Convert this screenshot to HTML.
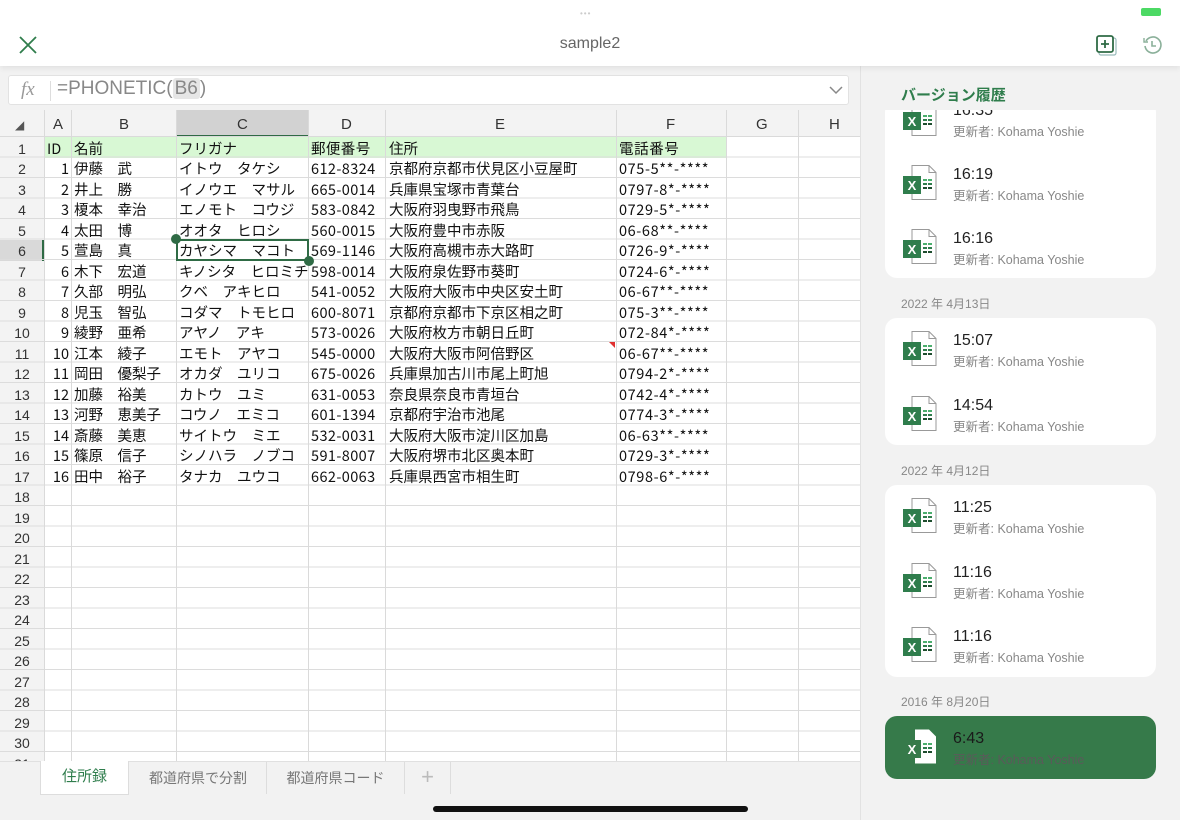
<!DOCTYPE html>
<html><head><meta charset="utf-8"><style>
*{margin:0;padding:0;box-sizing:border-box}
body{width:1180px;height:820px;overflow:hidden;background:#f2f2f2;font-family:"Liberation Sans","Noto Sans CJK JP",sans-serif;position:relative}
.abs{position:absolute}
#top{left:0;top:0;width:1180px;height:66px;background:#fff;box-shadow:0 2px 6px rgba(0,0,0,.08);z-index:5}
#grid{left:0;top:110px;width:860px;height:651px;background:#fff;overflow:hidden;font-family:"Noto Sans CJK JP","Liberation Sans",sans-serif;font-size:14.5px;color:#111}
.vl{position:absolute;top:0;width:1px;height:651px;background:#dadada}
.hl{position:absolute;left:0;width:860px;height:1px;background:#dadada}
.r{position:absolute;left:0;height:20.5px;line-height:20.5px;width:860px;white-space:nowrap}
.r span{position:absolute;top:1.5px}
.n{left:0;width:44px;text-align:center;color:#333;font-family:"Liberation Sans",sans-serif;font-size:14px}
.a{left:44px;width:25px;text-align:right}
.b{left:74px}.c{left:179px}.d{left:311px;letter-spacing:.4px}.e{left:389px}.f{left:619px;letter-spacing:.6px}
.card{position:absolute;left:885px;width:271px;background:#fff;border-radius:12px}
.it{position:absolute;left:903px;width:240px;height:50px}
.it .t{position:absolute;left:50px;top:3px;font-size:16px;color:#222}
.it .s{position:absolute;left:50px;top:22px;font-size:12.5px;color:#888}
.it svg{position:absolute;left:0;top:2px}
.dt{position:absolute;left:901px;font-size:12px;color:#888}
</style></head><body>
<div id="top" class="abs">
 <div class="abs" style="left:580px;top:9px;width:20px;height:4px;color:#ccc;font-size:8px;letter-spacing:1px">•••</div>
 <div class="abs" style="left:1141px;top:8px;width:20px;height:8px;background:#4cd964;border-radius:2px"></div>
 <svg class="abs" style="left:18px;top:35px" width="20" height="20"><path d="M2 2L18 18M18 2L2 18" stroke="#2f7d4c" stroke-width="1.8"/></svg>
 <div class="abs" style="left:0;width:1180px;top:35px;text-align:center;font-size:16px;color:#666">sample2</div>
 <svg class="abs" style="left:1095px;top:34px" width="24" height="24"><rect x="4" y="4" width="17" height="17" rx="2" fill="none" stroke="#9bb" stroke-width="1.2"/><rect x="2" y="2" width="16" height="16" rx="2" fill="#fff" stroke="#2f6b45" stroke-width="1.8"/><path d="M10 6v8M6 10h8" stroke="#2f6b45" stroke-width="1.8"/></svg>
 <svg class="abs" style="left:1142px;top:35px" width="20" height="20"><path d="M4 6A8 8 0 1 1 3 11" fill="none" stroke="#8bb09a" stroke-width="1.6"/><path d="M2 3v4h4" fill="none" stroke="#8bb09a" stroke-width="1.4"/><path d="M10 6v5h4" fill="none" stroke="#8bb09a" stroke-width="1.6"/></svg>
</div>
<div class="abs" style="left:8px;top:75px;width:841px;height:30px;background:#fff;border:1px solid #e2e2e2;border-radius:3px">
 <div class="abs" style="left:12px;top:3px;font-family:'Liberation Serif',serif;font-style:italic;font-size:19px;color:#999">fx</div>
 <div class="abs" style="left:41px;top:5px;width:1px;height:20px;background:#ddd"></div>
 <div class="abs" style="left:48px;top:2px;font-size:19px;color:#888">=PHONETIC(<span style="background:#e6e6e6;border-radius:3px;padding:0 2px">B6</span>)</div>
 <svg class="abs" style="left:820px;top:9px" width="14" height="10"><path d="M1 2l6 6 6-6" fill="none" stroke="#888" stroke-width="1.5"/></svg>
</div>
<div id="grid" class="abs">
 <div class="abs" style="left:0;top:0;width:860px;height:27px;background:#f3f3f3"></div>
 <div class="abs" style="left:0;top:0;width:44px;height:651px;background:#f3f3f3"></div>
 <div class="abs" style="left:176px;top:0;width:132px;height:27px;background:#d2d2d2;border-bottom:2px solid #2f6b45"></div>
 <div class="abs" style="left:0;top:130px;width:44px;height:20.5px;background:#d9d9d9;border-right:2px solid #2f6b45"></div>
 <div class="abs" style="left:44px;top:27px;width:682px;height:20.5px;background:#d8f8d4"></div>
 <div class="abs" style="left:0;top:27px;width:860px;height:624px;background:repeating-linear-gradient(to bottom,transparent 0,transparent 19.5px,#dcdcdc 19.5px,#dcdcdc 20.5px)"></div>
 <div class="vl" style="left:44px"></div><div class="vl" style="left:71px"></div><div class="vl" style="left:176px"></div><div class="vl" style="left:308px"></div><div class="vl" style="left:385px"></div><div class="vl" style="left:616px"></div><div class="vl" style="left:726px"></div><div class="vl" style="left:798px"></div>
 <div class="hl" style="top:26px"></div>
 <div class="r" style="top:3px;font-family:'Liberation Sans',sans-serif;color:#333;font-size:15px"><span style="left:15px;font-size:12px;color:#555">◢</span><span style="left:53px">A</span><span style="left:119px">B</span><span style="left:237px">C</span><span style="left:341px">D</span><span style="left:495px">E</span><span style="left:666px">F</span><span style="left:756px">G</span><span style="left:829px">H</span></div>
 <div class="r" style="top:27px"><span class="n">1</span><span style="left:47px">ID</span><span class="b">名前</span><span class="c">フリガナ</span><span class="d">郵便番号</span><span class="e">住所</span><span class="f">電話番号</span></div>
 <div class="r" style="top:47.5px"><span class="n">2</span><span class="a">1</span><span class="b">伊藤　武</span><span class="c">イトウ　タケシ</span><span class="d">612-8324</span><span class="e">京都府京都市伏見区小豆屋町</span><span class="f">075-5**-****</span></div>
 <div class="r" style="top:68px"><span class="n">3</span><span class="a">2</span><span class="b">井上　勝</span><span class="c">イノウエ　マサル</span><span class="d">665-0014</span><span class="e">兵庫県宝塚市青葉台</span><span class="f">0797-8*-****</span></div>
 <div class="r" style="top:88.5px"><span class="n">4</span><span class="a">3</span><span class="b">榎本　幸治</span><span class="c">エノモト　コウジ</span><span class="d">583-0842</span><span class="e">大阪府羽曳野市飛鳥</span><span class="f">0729-5*-****</span></div>
 <div class="r" style="top:109px"><span class="n">5</span><span class="a">4</span><span class="b">太田　博</span><span class="c">オオタ　ヒロシ</span><span class="d">560-0015</span><span class="e">大阪府豊中市赤阪</span><span class="f">06-68**-****</span></div>
 <div class="r" style="top:129.5px"><span class="n">6</span><span class="a">5</span><span class="b">萱島　真</span><span class="c">カヤシマ　マコト</span><span class="d">569-1146</span><span class="e">大阪府高槻市赤大路町</span><span class="f">0726-9*-****</span></div>
 <div class="r" style="top:150px"><span class="n">7</span><span class="a">6</span><span class="b">木下　宏道</span><span class="c">キノシタ　ヒロミチ</span><span class="d">598-0014</span><span class="e">大阪府泉佐野市葵町</span><span class="f">0724-6*-****</span></div>
 <div class="r" style="top:170.5px"><span class="n">8</span><span class="a">7</span><span class="b">久部　明弘</span><span class="c">クベ　アキヒロ</span><span class="d">541-0052</span><span class="e">大阪府大阪市中央区安土町</span><span class="f">06-67**-****</span></div>
 <div class="r" style="top:191px"><span class="n">9</span><span class="a">8</span><span class="b">児玉　智弘</span><span class="c">コダマ　トモヒロ</span><span class="d">600-8071</span><span class="e">京都府京都市下京区相之町</span><span class="f">075-3**-****</span></div>
 <div class="r" style="top:211.5px"><span class="n">10</span><span class="a">9</span><span class="b">綾野　亜希</span><span class="c">アヤノ　アキ</span><span class="d">573-0026</span><span class="e">大阪府枚方市朝日丘町</span><span class="f">072-84*-****</span></div>
 <div class="r" style="top:232px"><span class="n">11</span><span class="a">10</span><span class="b">江本　綾子</span><span class="c">エモト　アヤコ</span><span class="d">545-0000</span><span class="e">大阪府大阪市阿倍野区</span><span class="f">06-67**-****</span></div>
 <div class="r" style="top:252.5px"><span class="n">12</span><span class="a">11</span><span class="b">岡田　優梨子</span><span class="c">オカダ　ユリコ</span><span class="d">675-0026</span><span class="e">兵庫県加古川市尾上町旭</span><span class="f">0794-2*-****</span></div>
 <div class="r" style="top:273px"><span class="n">13</span><span class="a">12</span><span class="b">加藤　裕美</span><span class="c">カトウ　ユミ</span><span class="d">631-0053</span><span class="e">奈良県奈良市青垣台</span><span class="f">0742-4*-****</span></div>
 <div class="r" style="top:293.5px"><span class="n">14</span><span class="a">13</span><span class="b">河野　恵美子</span><span class="c">コウノ　エミコ</span><span class="d">601-1394</span><span class="e">京都府宇治市池尾</span><span class="f">0774-3*-****</span></div>
 <div class="r" style="top:314px"><span class="n">15</span><span class="a">14</span><span class="b">斎藤　美恵</span><span class="c">サイトウ　ミエ</span><span class="d">532-0031</span><span class="e">大阪府大阪市淀川区加島</span><span class="f">06-63**-****</span></div>
 <div class="r" style="top:334.5px"><span class="n">16</span><span class="a">15</span><span class="b">篠原　信子</span><span class="c">シノハラ　ノブコ</span><span class="d">591-8007</span><span class="e">大阪府堺市北区奥本町</span><span class="f">0729-3*-****</span></div>
 <div class="r" style="top:355px"><span class="n">17</span><span class="a">16</span><span class="b">田中　裕子</span><span class="c">タナカ　ユウコ</span><span class="d">662-0063</span><span class="e">兵庫県西宮市相生町</span><span class="f">0798-6*-****</span></div>
 <div class="r" style="top:375.5px"><span class="n">18</span></div><div class="r" style="top:396px"><span class="n">19</span></div><div class="r" style="top:416.5px"><span class="n">20</span></div><div class="r" style="top:437px"><span class="n">21</span></div><div class="r" style="top:457.5px"><span class="n">22</span></div><div class="r" style="top:478px"><span class="n">23</span></div><div class="r" style="top:498.5px"><span class="n">24</span></div><div class="r" style="top:519px"><span class="n">25</span></div><div class="r" style="top:539.5px"><span class="n">26</span></div><div class="r" style="top:560px"><span class="n">27</span></div><div class="r" style="top:580.5px"><span class="n">28</span></div><div class="r" style="top:601px"><span class="n">29</span></div><div class="r" style="top:621.5px"><span class="n">30</span></div><div class="r" style="top:642px"><span class="n">31</span></div>
 <div class="abs" style="left:609px;top:232px;width:0;height:0;border-left:6px solid transparent;border-top:6px solid #e03030"></div>
 <div class="abs" style="left:176px;top:129px;width:133px;height:22px;border:2px solid #2f6b45"></div>
 <div class="abs" style="left:171px;top:124px;width:10px;height:10px;border-radius:50%;background:#2f6b45"></div>
 <div class="abs" style="left:304px;top:146px;width:10px;height:10px;border-radius:50%;background:#2f6b45"></div>
</div>
<div class="abs" style="left:0;top:761px;width:860px;height:59px;background:#f2f2f2;border-top:1px solid #e0e0e0;font-size:14px;color:#777">
 <div class="abs" style="left:40px;top:-1px;width:89px;height:34px;background:#fff;border:1px solid #ddd;border-top:none;color:#2f7d4c;text-align:center;line-height:32px;font-size:15px">住所録</div>
 <div class="abs" style="left:130px;top:0;width:136px;height:32px;text-align:center;line-height:32px">都道府県で分割</div>
 <div class="abs" style="left:266px;top:0;width:1px;height:32px;background:#ddd"></div>
 <div class="abs" style="left:267px;top:0;width:137px;height:32px;text-align:center;line-height:32px">都道府県コード</div>
 <div class="abs" style="left:404px;top:0;width:1px;height:32px;background:#ddd"></div>
 <div class="abs" style="left:405px;top:0;width:45px;height:32px;text-align:center;line-height:30px;font-size:22px;color:#bbb">+</div>
 <div class="abs" style="left:450px;top:0;width:1px;height:32px;background:#ddd"></div>
</div>
<div class="abs" style="left:433px;top:806px;width:315px;height:6px;border-radius:3px;background:#111"></div>
<div class="abs" style="left:860px;top:66px;width:1px;height:754px;background:#e2e2e2"></div>
<div class="card" style="top:100px;height:178px"></div>
<div class="abs" style="left:861px;top:66px;width:319px;height:44px;background:#f2f2f2"></div>
<div class="abs" style="left:901px;top:84px;font-size:15px;font-weight:bold;color:#2f7d4c">バージョン履歴</div>
<div class="card" style="top:318px;height:127px"></div>
<div class="card" style="top:485px;height:192px"></div>
<div class="card" style="top:716px;height:63px;background:#367a4a"></div>
<div class="dt" style="top:295px">2022 年 4月13日</div>
<div class="dt" style="top:462px">2022 年 4月12日</div>
<div class="dt" style="top:693px">2016 年 8月20日</div>
<svg width="0" height="0" style="position:absolute"><defs><g id="xl"><path d="M9 .5h17l7 7v27H9z" fill="#fff" stroke="#999"/><path d="M26 .5v7h7" fill="none" stroke="#999"/><rect x="20" y="14" width="4" height="2" fill="#4caf6e"/><rect x="25" y="14" width="4" height="2" fill="#4caf6e"/><rect x="20" y="18" width="4" height="2" fill="#2f7d4c"/><rect x="25" y="18" width="4" height="2" fill="#2f7d4c"/><rect x="20" y="22" width="4" height="2" fill="#1e4d2e"/><rect x="25" y="22" width="4" height="2" fill="#1e4d2e"/><rect x="0" y="11" width="18" height="18" fill="#2f7d4c"/><text x="9" y="25" fill="#fff" font-size="13" font-weight="bold" text-anchor="middle" font-family="Liberation Sans">X</text></g></defs></svg>
<div class="abs" style="left:861px;top:110px;width:319px;height:168px;overflow:hidden">
 <div class="it" style="left:42px;top:-11px"><svg width="34" height="36"><use href="#xl"/></svg><span class="t">16:35</span><span class="s">更新者: Kohama Yoshie</span></div>
 <div class="it" style="left:42px;top:53px"><svg width="34" height="36"><use href="#xl"/></svg><span class="t">16:19</span><span class="s">更新者: Kohama Yoshie</span></div>
 <div class="it" style="left:42px;top:117px"><svg width="34" height="36"><use href="#xl"/></svg><span class="t">16:16</span><span class="s">更新者: Kohama Yoshie</span></div>
</div>
<div class="it" style="top:329px"><svg width="34" height="36"><use href="#xl"/></svg><span class="t">15:07</span><span class="s">更新者: Kohama Yoshie</span></div>
<div class="it" style="top:394px"><svg width="34" height="36"><use href="#xl"/></svg><span class="t">14:54</span><span class="s">更新者: Kohama Yoshie</span></div>
<div class="it" style="top:496px"><svg width="34" height="36"><use href="#xl"/></svg><span class="t">11:25</span><span class="s">更新者: Kohama Yoshie</span></div>
<div class="it" style="top:561px"><svg width="34" height="36"><use href="#xl"/></svg><span class="t">11:16</span><span class="s">更新者: Kohama Yoshie</span></div>
<div class="it" style="top:625px"><svg width="34" height="36"><use href="#xl"/></svg><span class="t">11:16</span><span class="s">更新者: Kohama Yoshie</span></div>
<div class="it" style="top:727px"><svg width="34" height="36"><path d="M12 .5h14l7 7v27H12z" fill="#fff"/><rect x="3" y="11" width="15" height="18" fill="#367a4a"/><text x="9" y="25" fill="#fff" font-size="13" font-weight="bold" text-anchor="middle" font-family="Liberation Sans">X</text><rect x="20" y="14" width="4" height="2" fill="#4caf6e"/><rect x="25" y="14" width="4" height="2" fill="#4caf6e"/><rect x="20" y="18" width="4" height="2" fill="#2f7d4c"/><rect x="25" y="18" width="4" height="2" fill="#2f7d4c"/><rect x="20" y="22" width="4" height="2" fill="#1e4d2e"/><rect x="25" y="22" width="4" height="2" fill="#1e4d2e"/></svg><span class="t" style="color:#1a1a1a">6:43</span><span class="s" style="color:#5a5a5a">更新者: Kohama Yoshie</span></div>
</body></html>
